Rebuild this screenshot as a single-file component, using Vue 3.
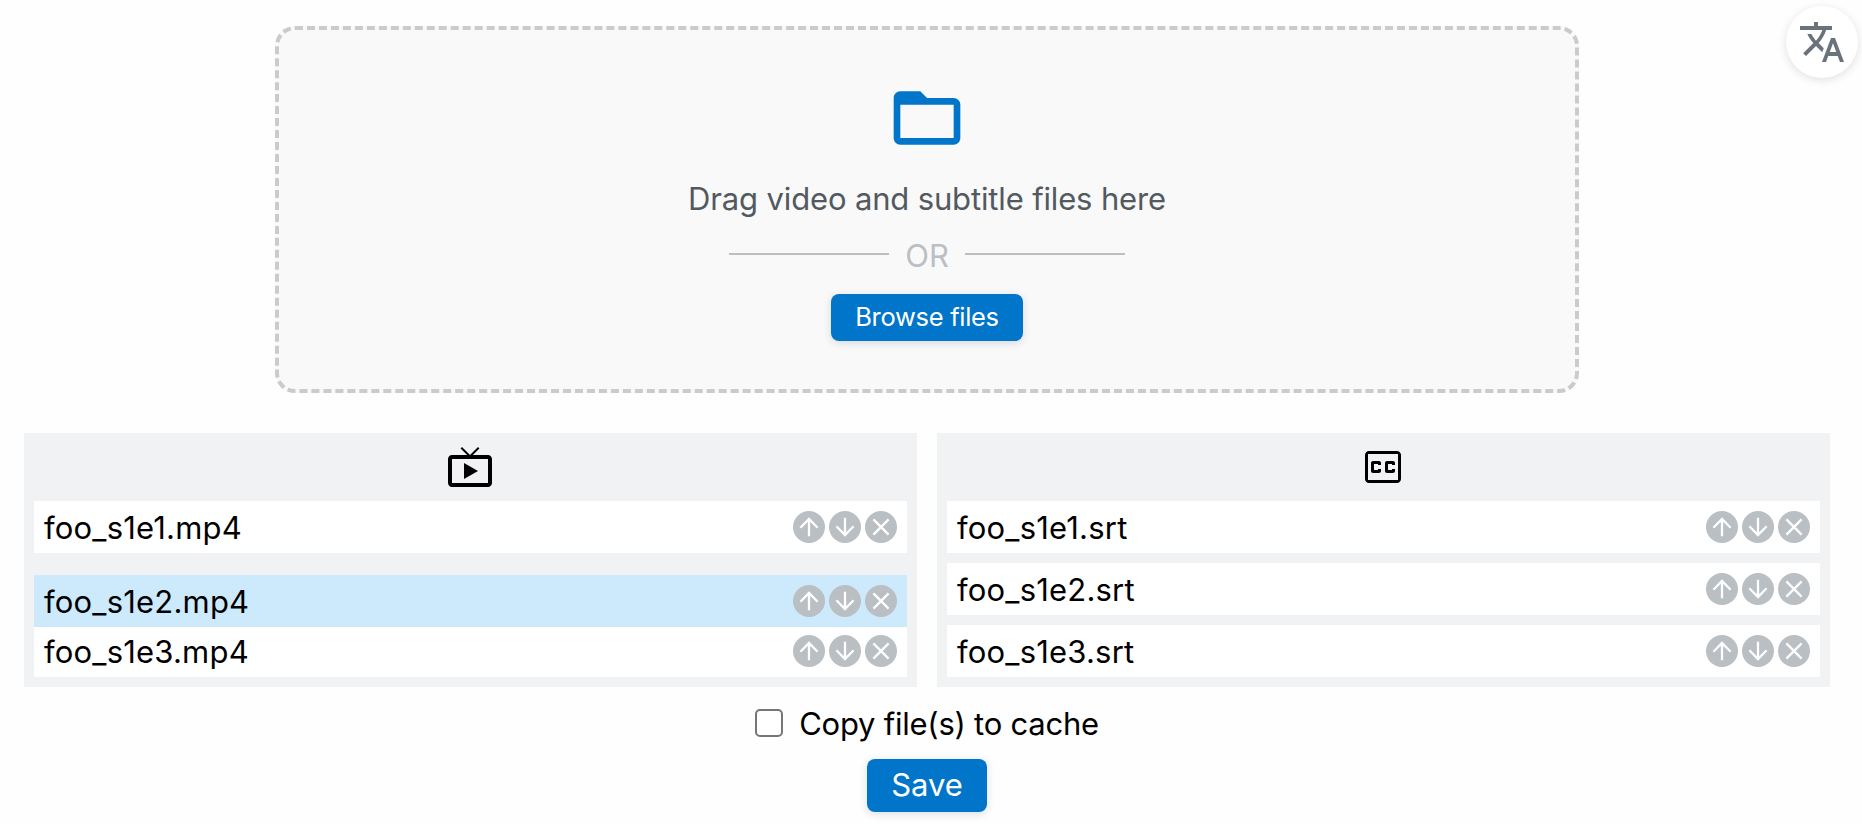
<script setup>
import { ref } from 'vue'

const panels = [
  { kind: 'video', files: ['foo_s1e1.mp4', 'foo_s1e2.mp4', 'foo_s1e3.mp4'], dragging: 1 },
  { kind: 'subtitle', files: ['foo_s1e1.srt', 'foo_s1e2.srt', 'foo_s1e3.srt'], dragging: -1 },
]
const actions = [
  { name: 'Move up', d: 'M16 25.3V8M7.4 16.7L16 8l8.6 8.7' },
  { name: 'Move down', d: 'M16 6.7V24M7.4 15.3L16 24l8.6-8.7' },
  { name: 'Remove', d: 'M8.4 8.4l15.2 15.2M23.6 8.4L8.4 23.6' },
]
const copyToCache = ref(false)
</script>

<template>
  <div class="page">
    <button class="language" aria-label="Language">
      <svg width="48" height="48" viewBox="0 0 24 24"><path d="M12.87 15.07l-2.54-2.51.03-.03c1.74-1.94 2.98-4.17 3.71-6.53H17V4h-7V2H8v2H1v1.99h11.17C11.5 7.92 10.44 9.75 9 11.35 8.07 10.32 7.3 9.19 6.69 8h-2c.73 1.63 1.73 3.17 2.98 4.56l-5.09 5.02L4 19l5-5 3.11 3.11.76-2.04zM18.5 10h-2L12 22h2l1.12-3h4.75L21 22h2l-4.5-12zm-2.62 7l1.62-4.33L19.12 17h-3.24z" /></svg>
    </button>

    <section class="dropzone">
      <svg class="folder" width="80" height="80" viewBox="0 0 24 24"><path d="M20 6h-8l-2-2H4c-1.1 0-1.99.9-1.99 2L2 18c0 1.1.9 2 2 2h16c1.1 0 2-.9 2-2V8c0-1.1-.9-2-2-2zm0 12H4V8h16v10z" /></svg>
      <div class="hint"><span>Drag video and subtitle files here</span></div>
      <div class="divider"><i></i><span>OR</span><i></i></div>
      <button class="primary browse"><span>Browse files</span></button>
    </section>

    <div class="panels">
      <section v-for="panel in panels" :key="panel.kind" class="panel">
        <svg v-if="panel.kind === 'video'" class="kind" width="48" height="48" viewBox="0 0 24 24"><path d="M21 6h-7.59l3.29-3.29L16 2l-4 4-4-4-.7.71L10.59 6H3c-1.1 0-2 .89-2 2v12c0 1.1.9 2 2 2h18c1.1 0 2-.9 2-2V8c0-1.11-.9-2-2-2zm0 14H3V8h18v12zM9 10v8l7-4z" /></svg>
        <svg v-else class="kind" width="48" height="48" viewBox="0 0 24 24"><path fill-rule="evenodd" d="M19 4H5c-1.11 0-2 .9-2 2v12c0 1.1.89 2 2 2h14c1.1 0 2-.9 2-2V6c0-1.1-.9-2-2-2zM19.5 18.5h-15v-13h15zM7 15h3c.55 0 1-.45 1-1v-1H9.5v.5h-2v-3h2v.5H11v-1c0-.55-.45-1-1-1H7c-.55 0-1 .45-1 1v4c0 .55.45 1 1 1zM14 15h3c.55 0 1-.45 1-1v-1h-1.5v.5h-2v-3h2v.5H18v-1c0-.55-.45-1-1-1h-3c-.55 0-1 .45-1 1v4c0 .55.45 1 1 1z" /></svg>
        <ul>
          <li v-for="(file, i) in panel.files" :key="file" :class="{ dragging: i === panel.dragging }">
            <span class="name">{{ file }}</span>
            <button v-for="a in actions" :key="a.name" class="action" :aria-label="a.name">
              <svg width="32" height="32" viewBox="0 0 32 32"><path :d="a.d" /></svg>
            </button>
          </li>
        </ul>
      </section>
    </div>

    <label class="cache">
      <input v-model="copyToCache" type="checkbox" />
      <span>Copy file(s) to cache</span>
    </label>
    <button class="primary save"><span>Save</span></button>
  </div>
</template>

<style>
body {
  margin: 0;
  background: #fefefe;
}
</style>

<style scoped>
.page {
  position: relative;
  box-sizing: border-box;
  height: 824px;
  padding: 26px 32px 0 24px;
  display: flex;
  flex-direction: column;
  align-items: center;
  overflow: hidden;
  color: #000;
  font: 31px/36px Inter, "Liberation Sans", sans-serif;
}
button {
  border: 0;
  padding: 0;
  font-family: inherit;
}
svg {
  display: block;
}
.language {
  position: absolute;
  top: 6px;
  right: 4px;
  width: 72px;
  height: 72px;
  border-radius: 50%;
  background: #fff;
  box-shadow: 0 2px 10px rgba(0, 0, 0, 0.12);
  display: grid;
  place-items: center;
}
.language path {
  fill: #6a737c;
}
.dropzone {
  box-sizing: border-box;
  width: 1304px;
  height: 367px;
  border: 4px dashed #c9cbcf;
  border-radius: 20px;
  background: #f9f9f9;
  padding-top: 48px;
  display: flex;
  flex-direction: column;
  align-items: center;
}
.folder path {
  fill: #0075c9;
}
.hint {
  margin-top: 23px;
  color: #525960;
  letter-spacing: -0.15px;
}
.divider {
  margin-top: 19px;
  display: flex;
  align-items: center;
  justify-content: space-between;
  width: 396px;
  color: #babfc4;
}
.divider span {
  padding-top: 2px;
  margin-bottom: -2px;
}
.divider i {
  width: 160px;
  height: 2px;
  background: #babfc4;
}
.primary {
  border-radius: 8px;
  background: #0075c9;
  color: #fff;
  box-shadow: 0 2px 8px rgba(0, 40, 80, 0.15);
}
.primary span {
  display: block;
  padding-bottom: 2px;
}
.browse {
  width: 192px;
  height: 47px;
  margin-top: 22px;
  font-size: 25.5px;
  letter-spacing: -0.3px;
}
.panels {
  width: 100%;
  margin-top: 40px;
  display: grid;
  grid-template-columns: 1fr 1fr;
  gap: 20px;
}
.panel {
  padding: 10px;
  background: #f1f2f4;
}
.kind {
  margin: 0 0 10px calc(50% - 24.5px);
}
ul {
  margin: 0;
  padding: 0;
  list-style: none;
  display: grid;
  gap: 10px;
}
li {
  box-sizing: border-box;
  height: 52px;
  padding: 0 10px;
  display: flex;
  align-items: center;
  gap: 4px;
  background: #fff;
}
li.dragging {
  position: relative;
  top: 12px;
  background: #cdeafd;
}
.name {
  flex: 1;
  padding-top: 2px;
  letter-spacing: 0.2px;
}
.action {
  width: 32px;
  height: 32px;
  border-radius: 50%;
  background: #babfc4;
}
.action path {
  fill: none;
  stroke: #fff;
  stroke-width: 2.3;
}
.cache {
  margin-top: 18px;
  height: 36px;
  display: flex;
  align-items: center;
  gap: 16px;
}
.cache span {
  padding-top: 2px;
  letter-spacing: -0.24px;
}
.cache input {
  appearance: none;
  box-sizing: border-box;
  width: 28px;
  height: 28px;
  margin: 0;
  border: 2px solid #767676;
  border-radius: 5px;
  background: #fff;
}
.save {
  width: 120px;
  height: 53px;
  margin-top: 18px;
  font-size: 31px;
}
</style>
